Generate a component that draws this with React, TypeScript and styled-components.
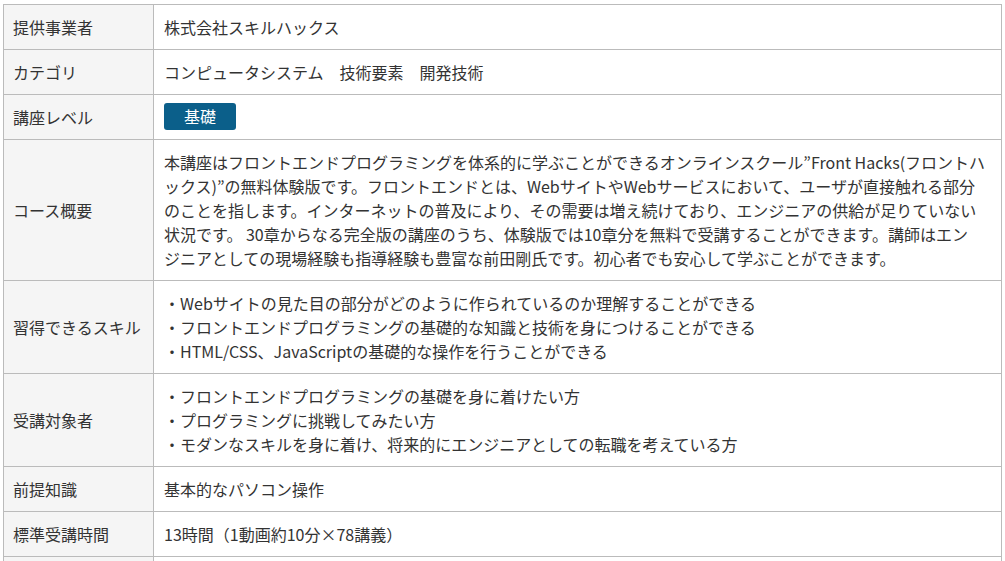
import React from "react";
import styled, { createGlobalStyle } from "styled-components";

const Global = createGlobalStyle`
  html, body { margin: 0; padding: 0; background: #fff; }
  body {
    font-family: "Noto Sans CJK JP", "Noto Sans", sans-serif;
    color: #333;
  }
`;

const Page = styled.div`
  padding: 4px 3px 0 3px;
`;

const Table = styled.table`
  width: 999px;
  border-collapse: collapse;
  table-layout: fixed;
  font-size: 16px;
  line-height: 24px;
`;

const LabelCol = styled.col`
  width: 150px;
`;

const Label = styled.th`
  background: #f5f5f5;
  border: 1px solid #bbb;
  padding: 10px 9px;
  text-align: left;
  font-weight: normal;
  vertical-align: middle;
  white-space: nowrap;
`;

const Value = styled.td`
  border: 1px solid #bbb;
  padding: 10px 10px;
  vertical-align: middle;
  background: #fff;
  white-space: nowrap;
`;

const Line = styled.div`
  height: 24px;
  line-height: 24px;
  overflow: visible;
`;

const Badge = styled.div`
  display: flex;
  align-items: center;
  justify-content: center;
  width: 72px;
  height: 27px;
  margin: -2px 0 -1px;
  border-radius: 3px;
  background: #0b5f8a;
  color: #fff;
  font-size: 16px;
  line-height: 27px;
`;

const rows: { label: string; lines?: string[]; badge?: string }[] = [
  { label: "提供事業者", lines: ["株式会社スキルハックス"] },
  { label: "カテゴリ", lines: ["コンピュータシステム　技術要素　開発技術"] },
  { label: "講座レベル", badge: "基礎" },
  {
    label: "コース概要",
    lines: [
      "本講座はフロントエンドプログラミングを体系的に学ぶことができるオンラインスクール”Front Hacks(フロントハ",
      "ックス)”の無料体験版です。フロントエンドとは、WebサイトやWebサービスにおいて、ユーザが直接触れる部分",
      "のことを指します。インターネットの普及により、その需要は増え続けており、エンジニアの供給が足りていない",
      "状況です。 30章からなる完全版の講座のうち、体験版では10章分を無料で受講することができます。講師はエン",
      "ジニアとしての現場経験も指導経験も豊富な前田剛氏です。初心者でも安心して学ぶことができます。",
    ],
  },
  {
    label: "習得できるスキル",
    lines: [
      "・Webサイトの見た目の部分がどのように作られているのか理解することができる",
      "・フロントエンドプログラミングの基礎的な知識と技術を身につけることができる",
      "・HTML/CSS、JavaScriptの基礎的な操作を行うことができる",
    ],
  },
  {
    label: "受講対象者",
    lines: [
      "・フロントエンドプログラミングの基礎を身に着けたい方",
      "・プログラミングに挑戦してみたい方",
      "・モダンなスキルを身に着け、将来的にエンジニアとしての転職を考えている方",
    ],
  },
  { label: "前提知識", lines: ["基本的なパソコン操作"] },
  { label: "標準受講時間", lines: ["13時間（1動画約10分×78講義）"] },
  { label: "受講料", lines: ["無料"] },
];

export default function App() {
  return (
    <>
      <Global />
      <Page>
        <Table>
          <colgroup>
            <LabelCol />
            <col />
          </colgroup>
          <tbody>
            {rows.map((r) => (
              <tr key={r.label}>
                <Label>
                  <Line>{r.label}</Line>
                </Label>
                <Value>
                  {r.badge ? (
                    <Badge>{r.badge}</Badge>
                  ) : (
                    r.lines!.map((l, i) => <Line key={i}>{l}</Line>)
                  )}
                </Value>
              </tr>
            ))}
          </tbody>
        </Table>
      </Page>
    </>
  );
}
